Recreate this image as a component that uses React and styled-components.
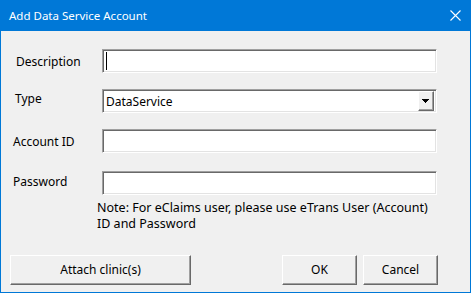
import React from 'react';
import styled, { createGlobalStyle } from 'styled-components';

const GlobalStyle = createGlobalStyle`
  html, body {
    margin: 0;
    padding: 0;
    background: #f0f0f0;
  }
  * {
    box-sizing: border-box;
  }
`;

const Window = styled.div`
  width: 471px;
  height: 293px;
  border: 1px solid #0078d7;
  border-top: none;
  background: #f0f0f0;
  display: flex;
  flex-direction: column;
  font-family: "Noto Sans", "Open Sans", sans-serif;
  font-size: 12px;
  color: #000;
`;

const TitleBar = styled.div`
  height: 31px;
  margin: 0 -1px;
  background: #0078d7;
  color: #fff;
  display: flex;
  align-items: center;
  justify-content: space-between;
  padding: 0 10px 1px 9px;
  font-size: 11.5px;
`;

const Body = styled.div`
  flex: 1;
  display: flex;
  flex-direction: column;
  padding: 18px 32px 7px 0;
`;

const Row = styled.div`
  display: flex;
  align-items: center;
  margin-top: ${p => p.gap || 0}px;
`;

const Label = styled.label`
  width: 101px;
  padding-left: ${p => p.indent}px;
  position: relative;
  top: ${p => p.shift || 0}px;
`;

const Field = styled.div`
  width: 335px;
  height: 24px;
  background: #fff;
  border: 1px solid;
  border-color: #a0a0a0 #fff #fff #a0a0a0;
  box-shadow: inset 1px 1px 0 #696969, inset -1px -1px 0 #e3e3e3;
  display: flex;
  align-items: center;
  padding-left: 3px;
  position: relative;
`;

const Caret = styled.span`
  width: 1px;
  height: 18px;
  background: #000;
`;

const DropButton = styled.div`
  position: absolute;
  right: 2px;
  top: 1px;
  width: 16px;
  height: 20px;
  background: #f0f0f0;
  border: 1px solid;
  border-color: #fff #696969 #696969 #fff;
  box-shadow: inset -1px -1px 0 #a0a0a0;
  display: flex;
  align-items: center;
  justify-content: center;
`;

const Note = styled.div`
  margin: 5px 0 0 96px;
  line-height: 16px;
  font-size: 12.5px;
`;

const Buttons = styled.div`
  margin-top: auto;
  display: flex;
  padding-left: 9px;
`;

const Button = styled.button`
  width: ${p => p.w}px;
  height: 30px;
  margin-left: ${p => p.gap || 0}px;
  background: #f0f0f0;
  border: 1px solid;
  border-color: #fff #696969 #696969 #fff;
  box-shadow: inset -1px -1px 0 #a0a0a0;
  font: inherit;
  color: #000;
  padding: 0 0 2px;
`;

export default function App() {
  return (
    <>
      <GlobalStyle />
      <Window>
        <TitleBar>
          <span>Add Data Service Account</span>
          <svg width="11" height="11" viewBox="0 0 11 11">
            <path d="M0.5 0.5 L10.5 10.5 M10.5 0.5 L0.5 10.5" stroke="#fff" strokeWidth="1.1" />
          </svg>
        </TitleBar>
        <Body>
          <Row>
            <Label indent={15}>Description</Label>
            <Field>
              <Caret />
            </Field>
          </Row>
          <Row gap={16}>
            <Label indent={14} shift={-3}>Type</Label>
            <Field>
              DataService
              <DropButton>
                <svg width="8" height="5" viewBox="0 0 8 5">
                  <path d="M0 0 H7 V1 H6 V2 H5 V3 H4 V4 H3 V3 H2 V2 H1 V1 H0 Z" fill="#000" />
                </svg>
              </DropButton>
            </Field>
          </Row>
          <Row gap={16}>
            <Label indent={12}>Account ID</Label>
            <Field />
          </Row>
          <Row gap={18}>
            <Label indent={12} shift={-2}>Password</Label>
            <Field />
          </Row>
          <Note>
            Note: For eClaims user, please use eTrans User (Account)
            <br />
            ID and Password
          </Note>
          <Buttons>
            <Button w={181}>Attach clinic(s)</Button>
            <Button w={75} gap={91}>OK</Button>
            <Button w={75} gap={6}>Cancel</Button>
          </Buttons>
        </Body>
      </Window>
    </>
  );
}
